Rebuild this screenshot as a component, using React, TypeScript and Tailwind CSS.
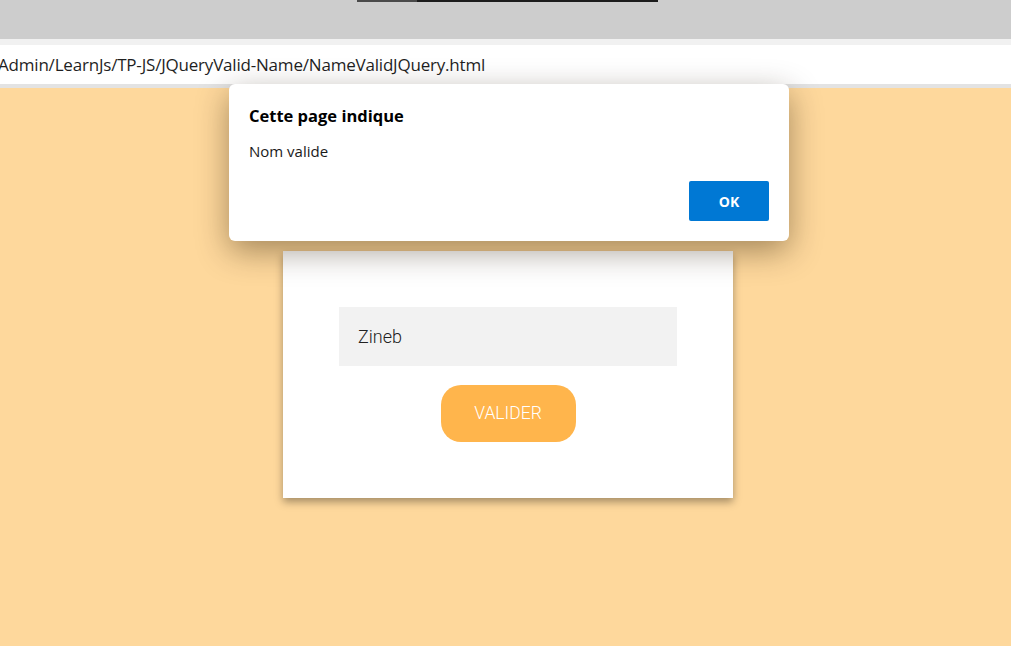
export default function App() {
  return (
    <div className="relative flex h-[646px] w-[1011px] flex-col overflow-hidden bg-[#fed89c]">
      {/* browser chrome */}
      <div className="relative h-[39px] shrink-0 bg-[#cdcdcd]">
        <div className="absolute left-[357px] top-0 flex h-[2px] w-[301px]">
          <div className="w-[60px] bg-[#4a4a4a]" />
          <div className="flex-1 bg-[#1c1c1c]" />
        </div>
      </div>
      <div className="h-[6px] shrink-0 bg-[#f1f1f1]" />
      <div className="flex h-[43px] shrink-0 items-center border-b-[4px] border-[#e3e3e3] bg-white">
        <span className="ml-[-2px] font-['Open_Sans',sans-serif] text-[17px] tracking-[-0.2px] text-[#1f1f1f]">
          Admin/LearnJs/TP-JS/JQueryValid-Name/NameValidJQuery.html
        </span>
      </div>

      {/* page */}
      <div className="flex flex-1 justify-center pl-[5px]">
        <div className="mt-[163px] flex h-[247px] w-[450px] flex-col items-center self-start bg-white px-[56px] pt-[56px] shadow-[0_4px_8px_rgba(0,0,0,0.35)]">
          <div className="flex h-[59px] w-full items-center bg-[#f2f2f2] px-[19px] font-['Roboto',sans-serif] text-[18px] font-light text-[#222]">
            Zineb
          </div>
          <button className="mt-[19px] h-[57px] w-[135px] rounded-[20px] bg-[#ffb54c] font-['Roboto',sans-serif] text-[17.5px] font-light text-white">
            VALIDER
          </button>
        </div>
      </div>

      {/* alert dialog */}
      <div className="absolute left-[229px] top-[84px] flex h-[157px] w-[560px] flex-col rounded-[6px] bg-white px-[20px] pt-[22px] font-['Open_Sans',sans-serif] shadow-[0_10px_32px_rgba(40,25,0,0.42)]">
        <div className="text-[16.5px] font-bold leading-[20px] text-black">Cette page indique</div>
        <div className="mt-[15px] text-[15px] leading-[20px] text-[#1a1a1a]">Nom valide</div>
        <div className="mt-auto mb-[20px] flex justify-end">
          <button className="h-[40px] w-[80px] rounded-[2px] bg-[#0078d4] text-[14px] font-bold text-white">OK</button>
        </div>
      </div>
    </div>
  )
}
